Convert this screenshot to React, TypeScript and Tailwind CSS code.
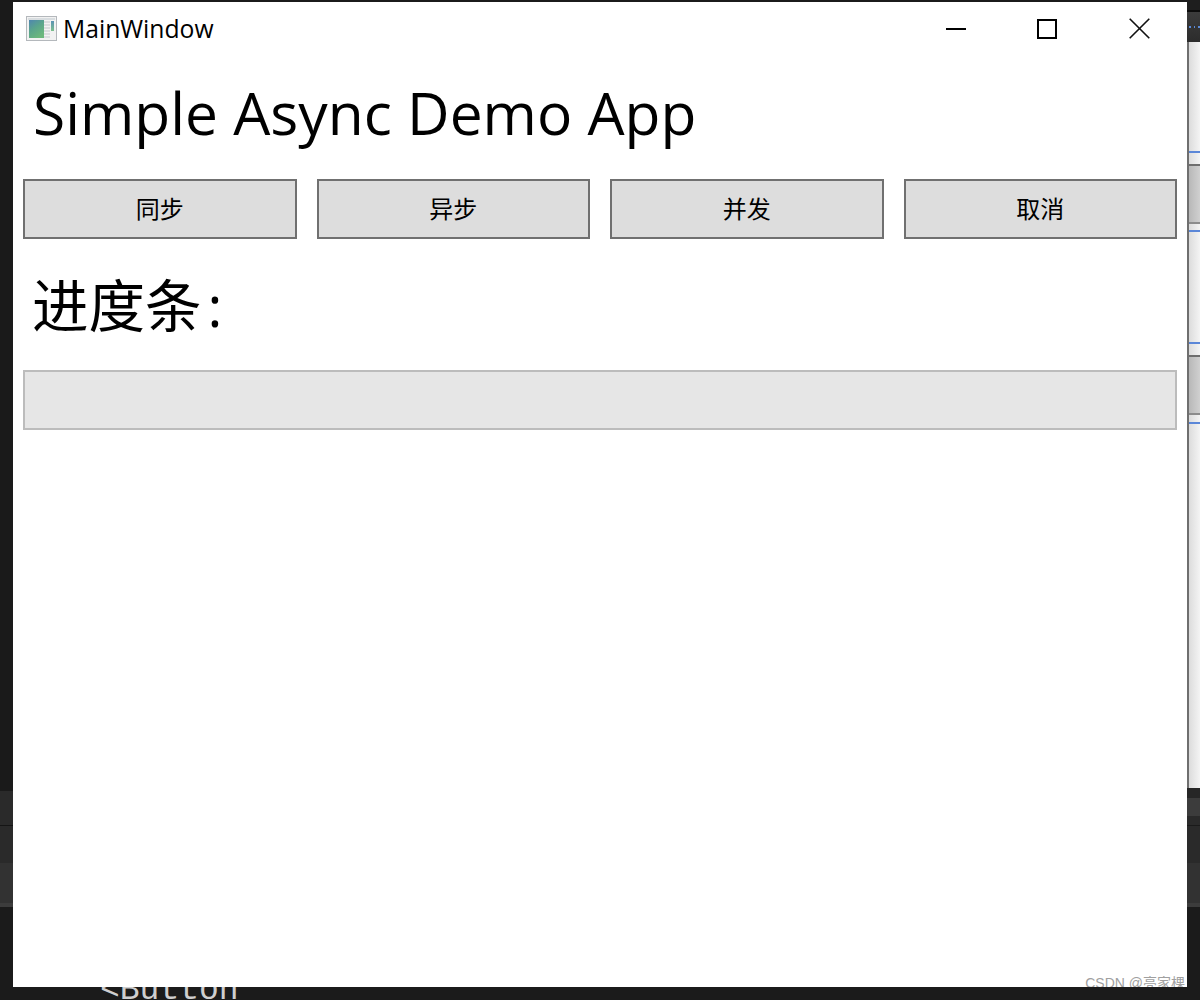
import React from 'react';

const cjk = 'font-["Open_Sans","Noto_Sans_CJK_SC",sans-serif]';

const WindowIcon = () => (
  <svg width="31" height="25" viewBox="0 0 31 25" className="shrink-0">
    <defs>
      <linearGradient id="pane" x1="0" y1="0" x2="0.6" y2="1">
        <stop offset="0" stopColor="#4f86b0" />
        <stop offset="0.5" stopColor="#5aa58c" />
        <stop offset="1" stopColor="#6cb87c" />
      </linearGradient>
      <linearGradient id="side" x1="0" y1="0" x2="0" y2="1">
        <stop offset="0" stopColor="#5c93b5" />
        <stop offset="1" stopColor="#7cc08c" />
      </linearGradient>
    </defs>
    <rect x="0.5" y="0.5" width="30" height="24" fill="#f2f2f2" stroke="#b4b8bc" />
    <rect x="2" y="2" width="27" height="2" fill="#d8dde0" />
    <rect x="3" y="4" width="15" height="18" fill="url(#pane)" />
    <rect x="25" y="5" width="3" height="10" fill="url(#side)" />
    <path d="M18 6h6M18 9h6M18 12h6M18 15h6M18 18h6M18 21h6" stroke="#c4c8cb" strokeWidth="1" />
  </svg>
);

const MinIcon = () => (
  <svg width="20" height="20" viewBox="0 0 20 20">
    <rect x="0" y="9" width="20" height="2" fill="#000" />
  </svg>
);

const MaxIcon = () => (
  <svg width="20" height="20" viewBox="0 0 20 20">
    <rect x="1" y="1" width="18" height="18" fill="none" stroke="#000" strokeWidth="2" />
  </svg>
);

const CloseIcon = () => (
  <svg width="21" height="21" viewBox="0 0 21 21">
    <path d="M0.7 0.7L20.3 20.3M20.3 0.7L0.7 20.3" stroke="#111" strokeWidth="1.6" fill="none" />
  </svg>
);

const LeftStrip = () => (
  <div className="flex w-[13px] shrink-0 flex-col bg-[#1b1b1b]">
    <div className="h-[791px] shrink-0 bg-[#1a1a1a]" />
    <div className="h-[34px] shrink-0 bg-[#2a2a2a]" />
    <div className="h-px shrink-0 bg-[#151515]" />
    <div className="h-[37px] shrink-0 bg-[#2a2a2a]" />
    <div className="h-[40px] shrink-0 bg-[#323232]" />
    <div className="h-[4px] shrink-0 bg-[#3c3c3c]" />
  </div>
);

const GreyBlock = () => (
  <>
    <div className="h-[2px] bg-[#6e6e6e]" />
    <div className="h-[56px] bg-linear-to-r from-[#b8b8b8] to-[#d0d0d0]" />
    <div className="h-[2px] bg-[#8c8c8c]" />
  </>
);

const LightGap = ({ h }: { h: string }) => (
  <div className={`${h} bg-linear-to-r from-[#dcdcdc] to-[#f4f4f4]`} />
);

const RightStrip = () => (
  <div className="flex w-[13px] shrink-0 flex-col bg-[#1b1b1b]">
    <div className="h-[10px] shrink-0 bg-[#1e1e1e]" />
    <div className="h-[2px] shrink-0 bg-[#0c0c0c]" />
    <div className="flex h-[30px] shrink-0 items-center gap-[3px] bg-linear-to-b from-[#3c3c3c] to-[#2c2c2c] pl-[2px]">
      <span className="h-[2px] w-[2px] bg-[#5b8ad8]" />
      <span className="h-[2px] w-[2px] bg-[#5b8ad8]" />
      <span className="h-[2px] w-[2px] bg-[#5b8ad8]" />
    </div>
    <div className="flex h-[746px] shrink-0 border-l-2 border-[#6f6f6f]">
      <div className="flex w-full flex-col">
        <LightGap h="h-[109px]" />
        <div className="h-[2px] bg-[#5b87d8]" />
        <LightGap h="h-[11px]" />
        <GreyBlock />
        <LightGap h="h-[6px]" />
        <div className="h-[2px] bg-[#5b87d8]" />
        <LightGap h="h-[110px]" />
        <div className="h-[2px] bg-[#5b87d8]" />
        <LightGap h="h-[11px]" />
        <GreyBlock />
        <LightGap h="h-[7px]" />
        <div className="h-[2px] bg-[#5b87d8]" />
        <LightGap h="h-[364px]" />
      </div>
    </div>
    <div className="h-[10px] shrink-0 bg-[#262626]" />
    <div className="h-[18px] shrink-0 bg-[#3c3c3c]" />
    <div className="h-[9px] shrink-0 bg-[#2a2a2a]" />
    <div className="h-px shrink-0 bg-[#1a1a1a]" />
    <div className="h-[37px] shrink-0 bg-[#2a2a2a]" />
    <div className="h-[40px] shrink-0 bg-[#323232]" />
    <div className="h-[4px] shrink-0 bg-[#3c3c3c]" />
  </div>
);

const labels = ['同步', '异步', '并发', '取消'];

export default function App() {
  return (
    <div className="flex h-[1000px] w-[1200px] flex-col overflow-hidden bg-[#1b1b1b]">
      <div className="flex h-[987px] shrink-0">
        <LeftStrip />
        <div className={`relative mt-[2px] flex min-w-0 flex-1 flex-col overflow-hidden bg-white text-black ${cjk}`}>
          <div className="flex h-[53px] shrink-0 items-center pl-[13px]">
            <WindowIcon />
            <span className="ml-[6px] mt-[2px] text-[24.7px] leading-none">MainWindow</span>
            <div className="ml-auto flex h-full items-center pr-[2px]">
              <button className="flex h-full w-[92px] items-center justify-center pl-[2px]"><MinIcon /></button>
              <button className="flex h-full w-[92px] items-center justify-center"><MaxIcon /></button>
              <button className="flex h-full w-[92px] items-center justify-center"><CloseIcon /></button>
            </div>
          </div>

          <h1 className="ml-[20px] mt-[17px] h-[80px] text-[58.7px] leading-[80px] font-normal">Simple Async Demo App</h1>

          <div className="mx-[10px] mt-[27px] grid grid-cols-4 gap-[20px]">
            {labels.map((label) => (
              <button key={label} className="h-[60px] border-2 border-[#707070] bg-[#dddddd] text-[24px] leading-none">
                {label}
              </button>
            ))}
          </div>

          <div className="ml-[19px] mt-[29px] h-[76px] text-[56.5px] leading-[76px]">
            进度条<span className="ml-[6px]">:</span>
          </div>

          <div className="mx-[10px] mt-[26px] h-[60px] border-2 border-[#bcbcbc] bg-[#e6e6e6]" />

          <div className="absolute right-[2px] bottom-[-3px] text-[14px] leading-none text-[#a0a0a0] font-['Liberation_Sans','Noto_Sans_CJK_SC',sans-serif]">
            CSDN @亮家棵
          </div>
        </div>
        <RightStrip />
      </div>
      <div className="h-[13px] shrink-0 overflow-hidden pl-[100px]">
        <div className="-mt-[16px] whitespace-pre text-[33px] leading-[40px] text-[#cfcfcf] font-['Liberation_Mono',monospace]">{'<Button'}</div>
      </div>
    </div>
  );
}
